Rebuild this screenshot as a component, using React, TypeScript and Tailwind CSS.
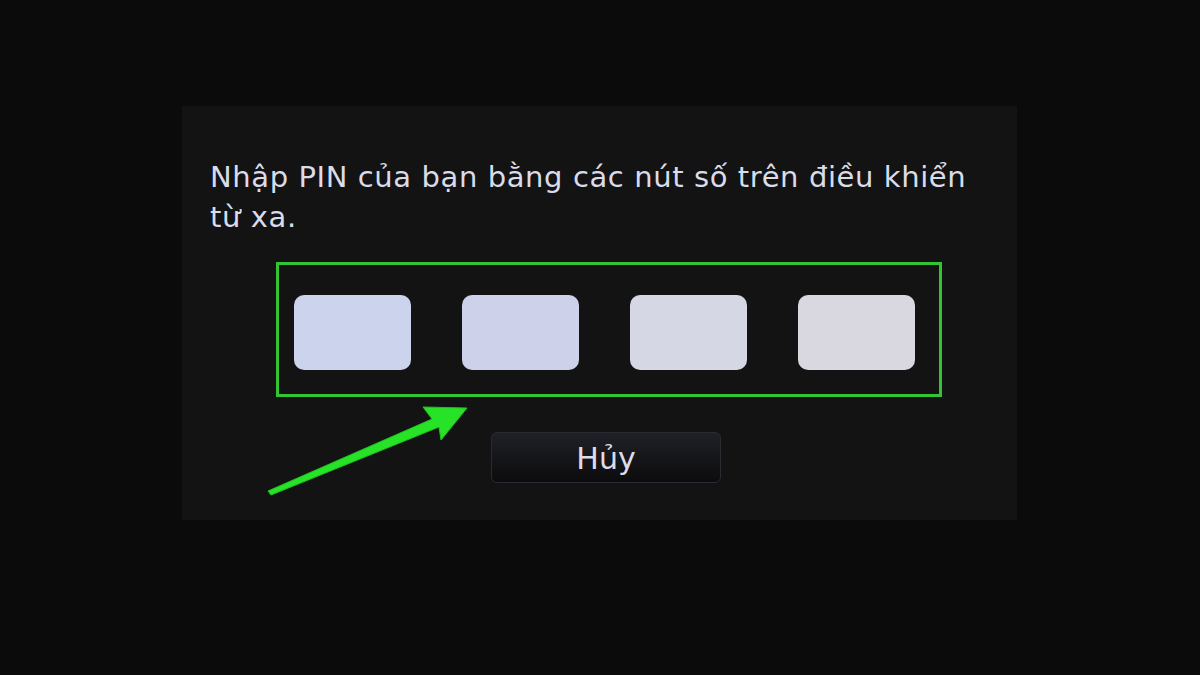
import React from 'react';

const slots = [
  'bg-[#ccd3ec]',
  'bg-[#cdd2ea]',
  'bg-[#d6d7e4]',
  'bg-[#d9d7e0]',
];

export default function App() {
  return (
    <div className="relative w-[1200px] h-[675px] bg-[#0b0b0b] overflow-hidden pt-[106px] pl-[182px]" style={{ fontFamily: '"DejaVu Sans", "Noto Sans", sans-serif' }}>
      {/* PIN dialog panel */}
      <div className="w-[835px] h-[414px] bg-[#131314] pt-[51px] pl-[28px]">
        <p className="text-[29px] leading-[40px] tracking-[0.6px] text-[#dadcea] whitespace-nowrap">
          Nhập PIN của bạn bằng các nút số trên điều khiển
          <br />
          từ xa.
        </p>

        {/* focused PIN entry row */}
        <div className="mt-[25px] ml-[66px] w-[666px] h-[135px] border-[3px] border-[#33c433] flex items-center gap-[51px] pl-[15px] pt-[5px]">
          {slots.map((bg, i) => (
            <div key={i} className={`w-[117px] h-[75px] rounded-[10px] ${bg}`} />
          ))}
        </div>

        <div className="mt-[35px] ml-[281px] w-[230px] h-[51px] rounded-[6px] border border-[#2a2b30] bg-gradient-to-b from-[#202127] to-[#0c0c0e] flex items-center justify-center">
          <span className="text-[30px] text-[#dcdde8] leading-none pt-[3px]">Hủy</span>
        </div>
      </div>

      {/* pointer arrow */}
      <svg className="absolute left-0 top-0 pointer-events-none" width="1200" height="675" viewBox="0 0 1200 675">
        <polygon
          points="467,408 423,407 432,419 268,491 271,495 439,427 441,440"
          fill="#27e327"
          stroke="#1fc21f"
          strokeWidth="1"
          strokeLinejoin="round"
        />
      </svg>
    </div>
  );
}
